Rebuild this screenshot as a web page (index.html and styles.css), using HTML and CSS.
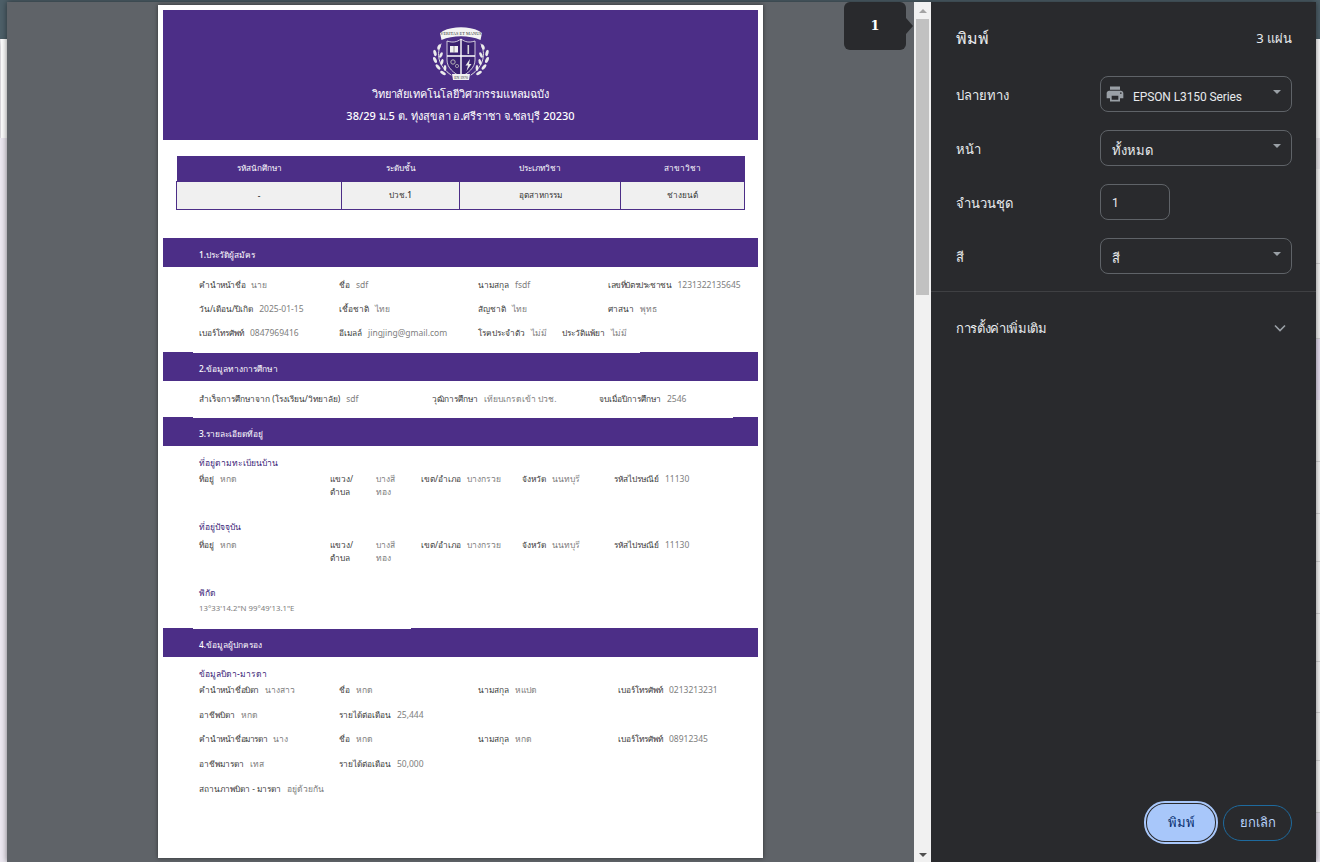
FILE: index.html
```html
<!DOCTYPE html>
<html lang="th">
  <head>
    <meta charset="UTF-8" />
    <title>พิมพ์ใบสมัคร</title>
    <link rel="stylesheet" href="styles.css">
  </head>

  <body>
    <!-- หน้าเว็บด้านหลังกล่องพิมพ์ -->
    <div class="behind">
      <div class="behind-top"></div>
      <div class="behind-card"></div>
      <div class="behind-rest">
        <div class="bg-row bg-h31"></div>
        <div class="bg-row bg-h95"></div>
        <div class="bg-row bg-h75"></div>
        <div class="bg-row bg-h61 bg-mark"></div>
        <div class="bg-row bg-h62"></div>
        <div class="bg-row bg-h52"></div>
        <div class="bg-row bg-h48"></div>
        <div class="bg-row bg-h52"></div>
        <div class="bg-row bg-h48"></div>
        <div class="bg-row bg-h51"></div>
        <div class="bg-row bg-h48"></div>
        <div class="bg-row bg-h52"></div>
      </div>
    </div>

    <div class="dialog">
      <div class="preview">
        <div class="paper">
          <header class="school">
            <svg class="crest" viewBox="0 0 58 54" width="58" height="54" aria-hidden="true">
              <g fill="none" stroke="#dcdcdc" stroke-width="1" stroke-linecap="round">
                <path d="M9 17 C4 27 6 39 19 48" />
                <path d="M49 17 C54 27 52 39 39 48" />
              </g>
              <g fill="#ececec">
                <ellipse cx="7" cy="20" rx="1.5" ry="3" transform="rotate(25 7 20)" />
                <ellipse cx="3" cy="26" rx="1.5" ry="3.2" transform="rotate(-15 3 26)" />
                <ellipse cx="9" cy="28" rx="1.4" ry="3" transform="rotate(25 9 28)" />
                <ellipse cx="3" cy="33" rx="1.5" ry="3.2" transform="rotate(-25 3 33)" />
                <ellipse cx="10" cy="35" rx="1.4" ry="3" transform="rotate(15 10 35)" />
                <ellipse cx="6" cy="40" rx="1.5" ry="3.2" transform="rotate(-40 6 40)" />
                <ellipse cx="13" cy="41" rx="1.4" ry="3" />
                <ellipse cx="11" cy="46" rx="1.5" ry="3.2" transform="rotate(-60 11 46)" />
                <ellipse cx="51" cy="20" rx="1.5" ry="3" transform="rotate(-25 51 20)" />
                <ellipse cx="55" cy="26" rx="1.5" ry="3.2" transform="rotate(15 55 26)" />
                <ellipse cx="49" cy="28" rx="1.4" ry="3" transform="rotate(-25 49 28)" />
                <ellipse cx="55" cy="33" rx="1.5" ry="3.2" transform="rotate(25 55 33)" />
                <ellipse cx="48" cy="35" rx="1.4" ry="3" transform="rotate(-15 48 35)" />
                <ellipse cx="52" cy="40" rx="1.5" ry="3.2" transform="rotate(40 52 40)" />
                <ellipse cx="45" cy="41" rx="1.4" ry="3" />
                <ellipse cx="47" cy="46" rx="1.5" ry="3.2" transform="rotate(60 47 46)" />
              </g>
              <path d="M15 14 C21 16 25 15 29 12 C33 15 37 16 43 14 V33 C43 41 36 46 29 50 C22 46 15 41 15 33 Z" fill="#3a2270" stroke="#f2f2f2" stroke-width="0.8" />
              <path d="M29 12 V50 M15 29 H43" stroke="#fff" stroke-width="1.4" />
              <rect x="18" y="19" width="8" height="6.5" fill="#f2f2f2" />
              <path d="M22 19 V25.5" stroke="#555" stroke-width="0.6" />
              <path d="M35.5 18 h1.6 v9 h-1.6 z" fill="#d8d8d8" />
              <circle cx="21" cy="35" r="2.2" fill="none" stroke="#b5b5b5" stroke-width="1" />
              <circle cx="25" cy="39" r="1.6" fill="none" stroke="#b5b5b5" stroke-width="0.8" />
              <path d="M38 32 L33.5 38.5 H36 L34.5 44 L39.5 37 H37 Z" fill="#e8e8e8" />
              <path d="M8 6 L11 4 C21 -1 37 -1 47 4 L50 6 L48.5 13 C37 8 21 8 9.5 13 Z" fill="#f4f4f4" />
              <text class="crest-motto" x="29" y="8" text-anchor="middle">VERITAS ET MANUS</text>
              <path d="M20 47 H38 L37 53 H21 Z" fill="#f0f0f0" />
              <text class="crest-year" x="29" y="51.5" text-anchor="middle">EN 1970</text>
            </svg>
            <h1>วิทยาลัยเทคโนโลยีวิศวกรรมแหลมฉบัง</h1>
            <p>38/29 ม.5 ต. ทุ่งสุขลา อ.ศรีราชา จ.ชลบุรี 20230</p>
          </header>

          <table class="student">
            <thead>
              <tr>
                <th>รหัสนักศึกษา</th>
                <th>ระดับชั้น</th>
                <th>ประเภทวิชา</th>
                <th>สาขาวิชา</th>
              </tr>
            </thead>
            <tbody>
              <tr>
                <td>-</td>
                <td>ปวช.1</td>
                <td>อุตสาหกรรม</td>
                <td>ช่างยนต์</td>
              </tr>
            </tbody>
          </table>

          <h2 class="bar bar-first">1.ประวัติผู้สมัคร</h2>
          <section class="body body-one">
            <div class="row row-info">
              <div class="c c140 tight"><b>คำนำหน้าชื่อ</b><i>นาย</i></div>
              <div class="c c139"><b>ชื่อ</b><i>sdf</i></div>
              <div class="c c130"><b>นามสกุล</b><i>fsdf</i></div>
              <div class="c tight"><b>เลขที่บัตรประชาชน</b><i>1231322135645</i></div>
            </div>
            <div class="row row-info">
              <div class="c c140"><b>วัน/เดือน/ปีเกิด</b><i>2025-01-15</i></div>
              <div class="c c139"><b>เชื้อชาติ</b><i>ไทย</i></div>
              <div class="c c130"><b>สัญชาติ</b><i>ไทย</i></div>
              <div class="c"><b>ศาสนา</b><i>พุทธ</i></div>
            </div>
            <div class="row row-info">
              <div class="c c140"><b>เบอร์โทรศัพท์</b><i>0847969416</i></div>
              <div class="c c139"><b>อีเมลล์</b><i>jingjing@gmail.com</i></div>
              <div class="c c84"><b>โรคประจำตัว</b><i>ไม่มี</i></div>
              <div class="c"><b>ประวัติแพ้ยา</b><i>ไม่มี</i></div>
            </div>
          </section>

          <h2 class="bar">2.ข้อมูลทางการศึกษา</h2>
          <section class="body body-two">
            <div class="row row-info">
              <div class="c c233"><b>สำเร็จการศึกษาจาก (โรงเรียน/วิทยาลัย)</b><i>sdf</i></div>
              <div class="c c167"><b>วุฒิการศึกษา</b><i>เทียบเกรดเข้า ปวช.</i></div>
              <div class="c"><b>จบเมื่อปีการศึกษา</b><i>2546</i></div>
            </div>
          </section>

          <h2 class="bar">3.รายละเอียดที่อยู่</h2>
          <section class="body body-three">
            <h3>ที่อยู่ตามทะเบียนบ้าน</h3>
            <div class="row row-addr">
              <div class="c c131"><b>ที่อยู่</b><i>หกด</i></div>
              <div class="c c91 split"><b>แขวง/ตำบล</b><i>บางสีทอง</i></div>
              <div class="c c101"><b>เขต/อำเภอ</b><i>บางกรวย</i></div>
              <div class="c c92"><b>จังหวัด</b><i>นนทบุรี</i></div>
              <div class="c"><b>รหัสไปรษณีย์</b><i>11130</i></div>
            </div>
            <h3 class="next">ที่อยู่ปัจจุบัน</h3>
            <div class="row row-addr">
              <div class="c c131"><b>ที่อยู่</b><i>หกด</i></div>
              <div class="c c91 split"><b>แขวง/ตำบล</b><i>บางสีทอง</i></div>
              <div class="c c101"><b>เขต/อำเภอ</b><i>บางกรวย</i></div>
              <div class="c c92"><b>จังหวัด</b><i>นนทบุรี</i></div>
              <div class="c"><b>รหัสไปรษณีย์</b><i>11130</i></div>
            </div>
            <h3>พิกัด</h3>
            <div class="coords">13°33'14.2"N 99°49'13.1"E</div>
          </section>

          <h2 class="bar">4.ข้อมูลผู้ปกครอง</h2>
          <section class="body body-four">
            <h3>ข้อมูลบิดา-มารดา</h3>
            <div class="row row-parent">
              <div class="c c140 tight"><b>คำนำหน้าชื่อบิดา</b><i>นางสาว</i></div>
              <div class="c c139"><b>ชื่อ</b><i>หกด</i></div>
              <div class="c c140"><b>นามสกุล</b><i>หแปด</i></div>
              <div class="c"><b>เบอร์โทรศัพท์</b><i>0213213231</i></div>
            </div>
            <div class="row row-parent">
              <div class="c c140"><b>อาชีพบิดา</b><i>หกด</i></div>
              <div class="c"><b>รายได้ต่อเดือน</b><i>25,444</i></div>
            </div>
            <div class="row row-parent">
              <div class="c c140 tight"><b>คำนำหน้าชื่อมารดา</b><i>นาง</i></div>
              <div class="c c139"><b>ชื่อ</b><i>หกด</i></div>
              <div class="c c140"><b>นามสกุล</b><i>หกด</i></div>
              <div class="c"><b>เบอร์โทรศัพท์</b><i>08912345</i></div>
            </div>
            <div class="row row-parent">
              <div class="c c140"><b>อาชีพมารดา</b><i>เทส</i></div>
              <div class="c"><b>รายได้ต่อเดือน</b><i>50,000</i></div>
            </div>
            <div class="row row-parent">
              <div class="c"><b>สถานภาพบิดา - มารดา</b><i>อยู่ด้วยกัน</i></div>
            </div>
          </section>
        </div>

        <!-- ป้ายเลขหน้า -->
        <div class="page-tip">1</div>
      </div>

      <div class="scrollbar">
        <span class="arrow-up"></span>
        <span class="thumb"></span>
        <span class="arrow-down"></span>
      </div>

      <aside class="side">
        <div class="side-head">
          <h2>พิมพ์</h2>
          <span>3 แผ่น</span>
        </div>

        <div class="settings">
          <div class="setting">
            <label>ปลายทาง</label>
            <div class="select">
              <svg class="printer" viewBox="0 0 24 24" width="20" height="20" aria-hidden="true">
                <path fill="#9aa0a6" d="M19 8H5c-1.66 0-3 1.34-3 3v6h4v4h12v-4h4v-6c0-1.66-1.34-3-3-3zm-3 11H8v-5h8v5zm3-7c-.55 0-1-.45-1-1s.45-1 1-1 1 .45 1 1-.45 1-1 1zm-1-9H6v4h12V3z" />
              </svg>
              <span class="en">EPSON L3150 Series</span>
            </div>
          </div>
          <div class="setting">
            <label>หน้า</label>
            <div class="select"><span>ทั้งหมด</span></div>
          </div>
          <div class="setting">
            <label>จำนวนชุด</label>
            <div class="select copies"><span class="en">1</span></div>
          </div>
          <div class="setting">
            <label>สี</label>
            <div class="select"><span>สี</span></div>
          </div>
        </div>

        <div class="more">
          <span>การตั้งค่าเพิ่มเติม</span>
          <svg viewBox="0 0 12 8" width="12" height="8" aria-hidden="true">
            <path d="M1 1.5 L6 6.5 L11 1.5" fill="none" stroke="#9aa0a6" stroke-width="1.6" />
          </svg>
        </div>

        <div class="actions">
          <button class="btn btn-print" type="button">พิมพ์</button>
          <button class="btn btn-cancel" type="button">ยกเลิก</button>
        </div>
      </aside>
    </div>
  </body>
</html>
```

FILE: styles.css
```css
/* พื้นฐาน */
* {
  box-sizing: border-box;
}

html,
body {
  height: 100%;
}

body {
  margin: 0;
  overflow: hidden;
  font-family: "Noto Sans", "Noto Sans CJK SC", sans-serif;
  background-color: #f2f0f4;
}

/* หน้าเว็บด้านหลัง */
.behind {
  height: 862px;
}

.behind-top {
  height: 39px;
  background-color: #4d5f68;
}

.behind-card {
  height: 99px;
  margin-left: 1px;
  background-color: #fdfdfd;
  box-shadow: 0 3px 6px rgba(0, 0, 0, 0.25);
}

.behind-rest {
  height: 724px;
  padding-left: 1000px;
  background-color: #ece8f1;
}

.bg-row {
  background-color: #f6f6f6;
  border-bottom: 1px solid #d6d6d6;
}

.bg-mark {
  background-color: #e8e0f2;
  border-bottom: 0;
}

.bg-h31 {
  height: 31px;
  border-bottom: 0;
  background-color: #ebe9ec;
}

.bg-h48 {
  height: 48px;
}

.bg-h51 {
  height: 51px;
}

.bg-h52 {
  height: 52px;
}

.bg-h61 {
  height: 61px;
}

.bg-h62 {
  height: 62px;
}

.bg-h75 {
  height: 75px;
}

.bg-h95 {
  height: 95px;
}

/* กล่องพิมพ์ */
.dialog {
  position: absolute;
  top: 2px;
  left: 7px;
  width: 1309px;
  height: 860px;
  display: flex;
  box-shadow: 0 0 6px rgba(0, 0, 0, 0.5);
}

.preview {
  position: relative;
  flex: 0 0 907px;
  padding: 3px 0 0 151px;
  background-color: #5f6368;
  overflow: hidden;
}

.paper {
  width: 605px;
  height: 853px;
  padding: 5px;
  background-color: #fff;
  box-shadow: 0 0 4px rgba(0, 0, 0, 0.5);
  color: #444;
  font-size: 8.5px;
}

/* หัวกระดาษ */
.school {
  height: 130px;
  padding-top: 17px;
  background-color: #4c2e87;
  color: #fff;
  text-align: center;
}

.crest {
  display: block;
  margin: 0 auto 2px;
}

.crest-motto {
  font-family: "Liberation Serif", serif;
  font-size: 4.4px;
  fill: #333;
}

.crest-year {
  font-family: "Liberation Serif", serif;
  font-size: 3.8px;
  fill: #333;
}

.school h1,
.school p {
  margin: 0;
  font-size: 11px;
  font-weight: 500;
  line-height: 22px;
}

.school h1 {
  letter-spacing: -0.15px;
}

/* ตารางนักศึกษา */
.student {
  width: 569px;
  margin: 16px 0 0 13px;
  border-collapse: collapse;
  table-layout: fixed;
  text-align: center;
  font-size: 8.2px;
}

.student th {
  height: 25px;
  background-color: #4c2e87;
  color: #fff;
  font-weight: 500;
}

.student td {
  height: 28px;
  background-color: #f0f0f0;
  border: 1px solid #4c2e87;
  color: #333;
  font-weight: 500;
}

.student th:nth-child(1),
.student td:nth-child(1) {
  width: 165px;
}

.student th:nth-child(2),
.student td:nth-child(2) {
  width: 118px;
}

.student th:nth-child(3),
.student td:nth-child(3) {
  width: 161px;
}

/* แถบหัวข้อ */
.bar {
  height: 29px;
  margin: 0;
  padding: 4px 0 0 36px;
  background-color: #4c2e87;
  color: #fff;
  font-size: 8.4px;
  font-weight: 500;
  line-height: 25px;
}

.bar-first {
  margin-top: 28px;
}

/* เนื้อหาแต่ละส่วน ทับขอบแถบถัดไป 1px */
.body {
  position: relative;
  margin: 0 0 -1px 30px;
  padding-left: 6px;
  background-color: #fff;
}

.body-one {
  width: 447px;
  height: 86px;
  padding-top: 6.5px;
}

.body-two {
  width: 540px;
  height: 37px;
  padding-top: 6px;
}

.body-three {
  width: 218px;
  height: 183px;
  padding-top: 10px;
}

.body-four {
  height: 180px;
  padding-top: 10px;
}

.row {
  display: flex;
  width: 555px;
}

.row-info {
  height: 24px;
  align-items: center;
}

.row-addr {
  height: 47.5px;
  align-items: flex-start;
  line-height: 13px;
}

.row-parent {
  height: 24.7px;
  align-items: center;
}

.c {
  display: flex;
  flex: none;
  align-items: baseline;
  gap: 6px;
  white-space: nowrap;
}

.c b {
  font-size: 8.3px;
  font-weight: 400;
  color: #3a3a3a;
}

.tight b {
  letter-spacing: -0.4px;
}

.c i {
  font-style: normal;
  color: #7e7e7e;
}

.c84 {
  width: 84px;
}

.c91 {
  width: 91px;
}

.c92 {
  width: 92px;
}

.c101 {
  width: 101px;
}

.c130 {
  width: 130px;
}

.c131 {
  width: 131px;
}

.c139 {
  width: 139px;
}

.c140 {
  width: 140px;
}

.c167 {
  width: 167px;
}

.c233 {
  width: 233px;
}

/* แขวง/ตำบล ตัดบรรทัดเป็นสองคอลัมน์ */
.split {
  gap: 7px;
}

.split b {
  width: 39px;
  white-space: normal;
}

.split i {
  width: 26px;
  white-space: normal;
}

.body h3 {
  margin: 0 0 2.5px;
  color: #3d1f7a;
  font-size: 8.5px;
  font-weight: 500;
  line-height: 14px;
}

.body h3.next {
  margin-bottom: 4.5px;
}

.body-four h3 {
  margin-bottom: -3px;
}

.coords {
  margin-top: 1px;
  color: #7e7e7e;
  font-size: 7.8px;
  line-height: 13px;
  white-space: nowrap;
}

/* ป้ายเลขหน้า */
.page-tip {
  position: absolute;
  top: 0;
  left: 837px;
  width: 62px;
  height: 48px;
  background-color: #292a2d;
  border-radius: 6px;
  color: #fff;
  font-family: "DejaVu Serif", serif;
  font-size: 13px;
  font-weight: 700;
  line-height: 48px;
  text-align: center;
}

.page-tip::after {
  content: "";
  position: absolute;
  top: 16px;
  right: -7px;
  border-left: 7px solid #292a2d;
  border-top: 8px solid transparent;
  border-bottom: 8px solid transparent;
}

/* แถบเลื่อน */
.scrollbar {
  display: flex;
  flex: 0 0 17px;
  flex-direction: column;
  align-items: center;
  background-color: #f1f1f1;
}

.arrow-up {
  margin-top: 7px;
  border-bottom: 4px solid #a3a3a3;
  border-left: 4px solid transparent;
  border-right: 4px solid transparent;
}

.thumb {
  width: 13px;
  height: 276px;
  margin-top: 6px;
  background-color: #c1c1c1;
}

.arrow-down {
  margin-top: auto;
  margin-bottom: 5px;
  border-top: 4px solid #505050;
  border-left: 4px solid transparent;
  border-right: 4px solid transparent;
}

/* แผงตั้งค่าการพิมพ์ */
.side {
  display: flex;
  flex: 1;
  flex-direction: column;
  background-color: #292a2d;
  color: #e8eaed;
  font-family: "Noto Sans", "Liberation Sans", sans-serif;
  font-size: 13px;
}

.side-head {
  display: flex;
  justify-content: space-between;
  align-items: center;
  height: 72px;
  padding: 0 24px 0 25px;
}

.side-head h2 {
  margin: 0;
  font-size: 16px;
  font-weight: 500;
}

.settings {
  display: flex;
  flex-direction: column;
  gap: 18px;
  padding: 2px 24px 17px 25px;
  border-bottom: 1px solid #3f4043;
}

.setting {
  display: flex;
  align-items: center;
  height: 36px;
}

.setting label {
  flex: 0 0 144px;
  padding-top: 2px;
}

.select {
  position: relative;
  display: flex;
  flex: 1;
  align-items: center;
  gap: 8px;
  height: 36px;
  padding: 4px 11px 0;
  border: 1px solid #5f6368;
  border-radius: 8px;
}

.select::after {
  content: "";
  position: absolute;
  top: 13px;
  right: 10px;
  border-top: 4px solid #9aa0a6;
  border-left: 4px solid transparent;
  border-right: 4px solid transparent;
}

.select .printer {
  margin: -4px 0 0 -7px;
}

.en {
  margin-top: 2px;
  font-family: "Roboto", "Liberation Sans", sans-serif;
  font-size: 12px;
  letter-spacing: -0.1px;
}

.copies {
  flex: 0 0 70px;
  padding-top: 0;
}

.copies::after {
  display: none;
}

.more {
  display: flex;
  justify-content: space-between;
  align-items: center;
  height: 72px;
  padding: 0 30px 0 25px;
  font-weight: 500;
  letter-spacing: -0.35px;
}

.actions {
  display: flex;
  justify-content: flex-end;
  align-items: center;
  gap: 8px;
  margin-top: auto;
  padding: 0 24px 21px 0;
}

.btn {
  height: 36px;
  border-radius: 18px;
  font-family: inherit;
  font-size: 13px;
  font-weight: 500;
}

.btn-print {
  width: 68px;
  height: 37px;
  background-color: #a8c7fa;
  border: 0;
  color: #062e6f;
  outline: 2px solid #a8c7fa;
  outline-offset: 1px;
  box-shadow: 0 0 0 1px #292a2d;
}

.btn-cancel {
  width: 69px;
  background-color: transparent;
  border: 1px solid #1e6a9e;
  color: #b8d2fb;
}
```
